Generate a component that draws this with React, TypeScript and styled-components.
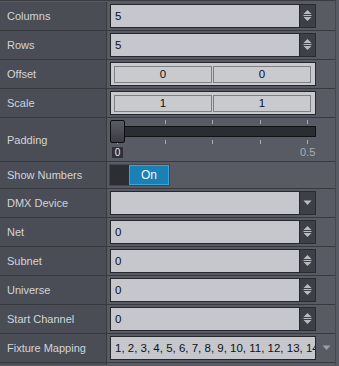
import React from "react";
import styled, { createGlobalStyle } from "styled-components";

const Global = createGlobalStyle`
  html, body { margin: 0; padding: 0; background: #585b63; overflow: hidden; }
  body { font-family: "Liberation Sans", Arial, sans-serif; font-size: 11px; }
`;

const Panel = styled.div`
  width: 336px;
  height: 365px;
  overflow: hidden;
  border-right: 1px solid #46484e;
  border-top: 1px solid #3a3c41;
  padding-top: 1px;
  box-sizing: border-box;
  background: #585b63;
`;

const Row = styled.div<{ $h?: number }>`
  display: grid;
  grid-template-columns: 107px 1fr;
  height: ${(p) => p.$h ?? 28}px;
  border-bottom: 1px solid #38393e;
`;

const Label = styled.div`
  background: #4a4d55;
  border-right: 1px solid #3a3b40;
  color: #d2d4d9;
  display: flex;
  align-items: center;
  padding-left: 7px;
  font-size: 11px;
`;

const Cell = styled.div`
  display: flex;
  align-items: center;
  padding-left: 3px;
  background: #585b63;
`;

const Field = styled.div<{ $w?: number }>`
  display: flex;
  width: ${(p) => p.$w ?? 206}px;
  height: 24px;
  box-sizing: border-box;
`;

const TextBox = styled.div`
  flex: 1;
  min-width: 0;
  background: #c6c7cc;
  border: 1px solid #26272b;
  color: #111;
  display: flex;
  align-items: center;
  padding-left: 4px;
  white-space: nowrap;
  overflow: hidden;
  font-size: 11.5px;
`;

const SideButton = styled.div`
  width: 15px;
  background: #3d4047;
  border: 1px solid #2a2b30;
  border-left: none;
  display: flex;
  align-items: center;
  justify-content: center;
`;

const PairBox = styled.div`
  width: 206px;
  height: 24px;
  box-sizing: border-box;
  background: #c9cace;
  border: 1px solid #26272b;
  display: flex;
  align-items: center;
  gap: 1px;
  padding: 0 4px 0 3px;
`;

const PairPart = styled.div`
  flex: 1;
  height: 17px;
  box-sizing: border-box;
  border: 1px solid #7d7f84;
  display: flex;
  align-items: center;
  justify-content: center;
  color: #111;
  font-size: 11.5px;
`;

const SliderArea = styled.div`
  position: relative;
  width: 210px;
  height: 43px;
`;

const Track = styled.div`
  position: absolute;
  left: 0;
  top: 8px;
  width: 206px;
  height: 11px;
  box-sizing: border-box;
  background: #2c2d32;
  border: 1px solid #111214;
`;

const Tick = styled.div<{ $top: number }>`
  position: absolute;
  top: ${(p) => p.$top}px;
  width: 1px;
  height: 4px;
  background: #a9abb1;
`;

const Thumb = styled.div`
  position: absolute;
  left: 0;
  top: 2px;
  width: 15px;
  height: 23px;
  box-sizing: border-box;
  border: 1px solid #0e0e10;
  border-radius: 2px;
  background: linear-gradient(#5a5d64, #3a3c42);
`;

const MinLabel = styled.div`
  position: absolute;
  left: 2px;
  top: 29px;
  width: 11px;
  height: 11px;
  background: #2e3035;
  color: #e8f0ff;
  font-size: 10px;
  display: flex;
  align-items: center;
  justify-content: center;
`;

const MaxLabel = styled.div`
  position: absolute;
  left: 190px;
  top: 29px;
  color: #a9adb5;
  font-size: 11px;
  line-height: 11px;
`;

const Toggle = styled.div`
  display: flex;
  width: 61px;
  height: 22px;
  box-sizing: border-box;
  border: 1px solid #45474e;
  margin-left: -1px;
`;

const ToggleOff = styled.div`
  width: 19px;
  background: #2d2e33;
`;

const ToggleOn = styled.div`
  flex: 1;
  background: #1b80b3;
  border: 1px solid #3aa7dc;
  color: #f2f6fa;
  display: flex;
  align-items: center;
  justify-content: center;
  font-size: 12px;
`;

const OuterArrow = styled.div`
  width: 20px;
  display: flex;
  justify-content: center;
  align-items: center;
`;

const Spin = () => (
  <svg width="9" height="12" viewBox="0 0 9 12">
    <polygon points="4.5,0 8.5,4 0.5,4" fill="#b9bbc1" />
    <rect x="0.5" y="5" width="8" height="1" fill="#b9bbc1" />
    <polygon points="0.5,7 8.5,7 4.5,11" fill="#b9bbc1" />
  </svg>
);

const Drop = ({ color = "#b9bbc1" }: { color?: string }) => (
  <svg width="9" height="6" viewBox="0 0 9 6">
    <polygon points="0.5,0.5 8.5,0.5 4.5,5" fill={color} />
  </svg>
);

const NumberField = ({ value }: { value: string }) => (
  <Field>
    <TextBox>{value}</TextBox>
    <SideButton>
      <Spin />
    </SideButton>
  </Field>
);

const Pair = ({ a, b }: { a: string; b: string }) => (
  <PairBox>
    <PairPart>{a}</PairPart>
    <PairPart>{b}</PairPart>
  </PairBox>
);

const ticks = [7, 55, 102, 150, 197];

export default function App() {
  return (
    <>
      <Global />
      <Panel>
        <Row>
          <Label>Columns</Label>
          <Cell><NumberField value="5" /></Cell>
        </Row>
        <Row>
          <Label>Rows</Label>
          <Cell><NumberField value="5" /></Cell>
        </Row>
        <Row>
          <Label>Offset</Label>
          <Cell><Pair a="0" b="0" /></Cell>
        </Row>
        <Row>
          <Label>Scale</Label>
          <Cell><Pair a="1" b="1" /></Cell>
        </Row>
        <Row $h={43}>
          <Label>Padding</Label>
          <Cell>
            <SliderArea>
              {ticks.map((x) => (
                <React.Fragment key={x}>
                  <Tick $top={2} style={{ left: x }} />
                  <Tick $top={22} style={{ left: x }} />
                </React.Fragment>
              ))}
              <Track />
              <Thumb />
              <MinLabel>0</MinLabel>
              <MaxLabel>0.5</MaxLabel>
            </SliderArea>
          </Cell>
        </Row>
        <Row $h={26}>
          <Label>Show Numbers</Label>
          <Cell>
            <Toggle>
              <ToggleOff />
              <ToggleOn>On</ToggleOn>
            </Toggle>
          </Cell>
        </Row>
        <Row>
          <Label>DMX Device</Label>
          <Cell>
            <Field>
              <TextBox />
              <SideButton><Drop /></SideButton>
            </Field>
          </Cell>
        </Row>
        <Row>
          <Label>Net</Label>
          <Cell><NumberField value="0" /></Cell>
        </Row>
        <Row>
          <Label>Subnet</Label>
          <Cell><NumberField value="0" /></Cell>
        </Row>
        <Row>
          <Label>Universe</Label>
          <Cell><NumberField value="0" /></Cell>
        </Row>
        <Row>
          <Label>Start Channel</Label>
          <Cell><NumberField value="0" /></Cell>
        </Row>
        <Row>
          <Label>Fixture Mapping</Label>
          <Cell>
            <Field $w={206}>
              <TextBox>1, 2, 3, 4, 5, 6, 7, 8, 9, 10, 11, 12, 13, 14, 15, 16</TextBox>
            </Field>
            <OuterArrow><Drop color="#9c9ea5" /></OuterArrow>
          </Cell>
        </Row>
        <Row $h={3}>
          <Label />
          <Cell />
        </Row>
      </Panel>
    </>
  );
}
